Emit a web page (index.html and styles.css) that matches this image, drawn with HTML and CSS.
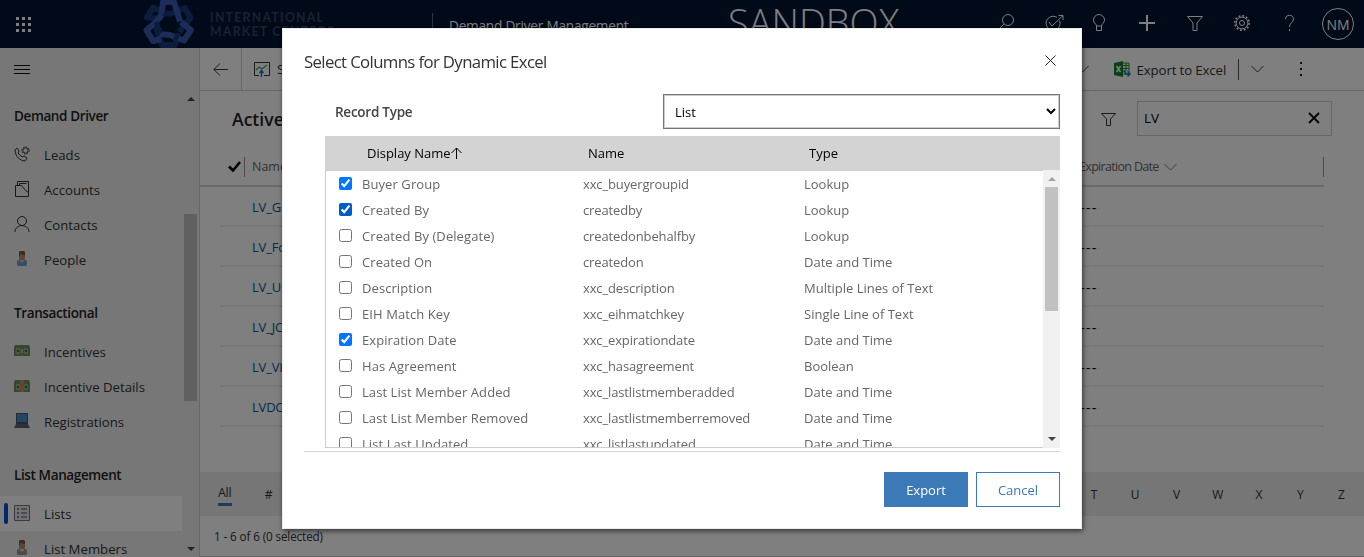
FILE: index.html
```html
<!DOCTYPE html>
<html lang="en">
<head>
<meta charset="utf-8">
<title>Demand Driver Management</title>
<link rel="stylesheet" href="styles.css">
</head>
<body>
<div class="app">
  <header class="topbar">
    <svg class="waffle" width="15" height="15" viewBox="0 0 15 15" fill="#fff"><path d="M0 0h3v3H0zM6 0h3v3H6zM12 0h3v3h-3zM0 6h3v3H0zM6 6h3v3H6zM12 6h3v3h-3zM0 12h3v3H0zM6 12h3v3H6zM12 12h3v3h-3z"/></svg>
    <svg class="logo" width="52" height="48" viewBox="0 0 52 48" fill="none" stroke-width="6" stroke-linejoin="round">
      <path d="M16 19L4 17.500L10 7.500L22 13Q27 15 32 12M32 12L42 8L47.500 18L36 32M13 27L19 45H32L34 37" stroke="#193878"/>
      <path d="M18.500 14L20 2H31L37 21.500" stroke="#3a5ab4"/>
      <path d="M19 14.500L12 23L3.500 30L10 41L18 39" stroke="#3a5ab4"/>
      <path d="M17 34L27 35L41 40.500L48 30L38 22" stroke="#3a5ab4"/>
      <path d="M13 22L18 33M36 33L32 40M21 13l8 1" stroke="#193878" stroke-width="4.500"/>
    </svg>
    <div class="brand"><span>INTERNATIONAL</span><span>MARKET CENTERS</span></div>
    <div class="topsep"></div>
    <span class="appname">Demand Driver Management</span>
    <span class="env">SANDBOX</span>
    <nav class="topicons">
      <svg width="48" height="48" viewBox="0 0 48 48"><circle cx="26" cy="20" r="5.500"/><path d="M22 24l-6 6"/></svg>
      <svg width="48" height="48" viewBox="0 0 48 48"><path d="M28 17.500a7 7 0 1 0 2.500 3M20 22l3 4L34 15.500M29.500 15.500H34V20"/></svg>
      <svg width="48" height="48" viewBox="0 0 48 48"><path d="M21.500 26c0-2-3-3-3-6a5.500 5.500 0 0 1 11 0c0 3-3 4-3 6zM21.500 26v4.500h5V26"/></svg>
      <svg width="48" height="48" viewBox="0 0 48 48"><path d="M24 15v16M16 23h16" stroke-width="2"/></svg>
      <svg width="48" height="48" viewBox="0 0 48 48"><path d="M16.500 16.500h15L26 23v7.500h-4V23z"/></svg>
      <svg width="48" height="48" viewBox="0 0 48 48"><circle cx="24" cy="23" r="2.500"/><circle cx="24" cy="23" r="5.900"/><circle cx="24" cy="23" r="7.200" stroke-width="1.600" stroke-dasharray="1.900 1.870"/></svg>
      <svg width="48" height="48" viewBox="0 0 48 48"><path d="M19.500 19c0-5 8-5 8 0 0 3.500-4 3.500-4 8M23.500 29v2"/></svg>
    </nav>
    <div class="avatar">NM</div>
  </header>

  <div class="body">
    <aside class="side">
      <div class="burger"><i></i><i></i><i></i></div>
      <div class="sidescroll">
        <div class="menu">
          <h2>Demand Driver</h2>
          <a><svg class="ico" viewBox="0 0 16 16"><path d="M1 4l2-2 2 3-1 2 4 4 2-1 3 2-2 3C6 15 1 10 1 4z"/><circle cx="11.500" cy="4.500" r="2.700"/><circle cx="11.500" cy="4.500" r="3.700" stroke-dasharray="1.400 1.500"/></svg><span>Leads</span></a>
          <a><svg class="ico" viewBox="0 0 16 16"><path d="M1.500 4.500v11h13v-4l-3-2-4-5zM3.500 4V.500h11v11M5.500 4V2.500h7"/></svg><span>Accounts</span></a>
          <a><svg class="ico" viewBox="0 0 16 16"><circle cx="8" cy="5" r="4.500"/><path d="M1 16c0-8.500 14-8.500 14 0"/></svg><span>Contacts</span></a>
          <a><svg class="ico solid" viewBox="0 0 16 16"><path d="M3 14V10l3-2h4l3 2v4l-1 1H4z" fill="#7098c8"/><path d="M6 7h4v3l-2 2-2-2z" fill="#d9c5b0"/><path d="M5 3h6v4l-1 2H6L5 7z" fill="#bc8864"/><path d="M5 1l1-1h4l1 1v3H9L8 3H6v2H5z" fill="#7c5640"/></svg><span>People</span></a>
          <h2>Transactional</h2>
          <a><svg class="ico solid" viewBox="0 0 16 16"><path d="M1 2h14l1 2v9H0V4z" fill="#6f9062"/><path d="M2 5h12v6H2z" fill="#94b082"/><path d="M3 7h2v2H3zM11 7h2v2h-2z" fill="#496345"/><path d="M6 5h4v6H6z" fill="#6f9062"/><path d="M7 6h2v4H7z" fill="#a8c494"/></svg><span>Incentives</span></a>
          <a><svg class="ico solid" viewBox="0 0 16 16"><path d="M1 2h14l1 2v10H0V4z" fill="#6f9062"/><path d="M2 6h12v6H2z" fill="#94b082"/><path d="M3 8h2v2H3zM11 8h2v2h-2z" fill="#496345"/><path d="M6 2h4v12H6z" fill="#c98d60"/></svg><span>Incentive Details</span></a>
          <a><svg class="ico solid" viewBox="0 0 16 16"><path d="M2 0h12v11H2z" fill="#48566a"/><path d="M3 1h10v8H3z" fill="#4690cc"/><path d="M2 11h12l2 4H0z" fill="#5b6068"/></svg><span>Registrations</span></a>
          <h2>List Management</h2>
          <a class="active"><svg class="ico" viewBox="0 0 16 16"><path d="M.500 .500h15v15H.500z" stroke="#777" fill="#e4e4e4"/><path d="M7 4h6M7 8h6M7 12h6" stroke="#555"/><path d="M3 4h2M3 8h2M3 12h2" stroke="#5b8ab8" stroke-width="2"/></svg><span>Lists</span></a>
          <a><svg class="ico solid" viewBox="0 0 16 16"><path d="M3 14V10l3-2h4l3 2v4l-1 1H4z" fill="#999"/><path d="M6 7h4v3l-2 2-2-2z" fill="#e0d4c8"/><path d="M5 3h6v4l-1 2H6L5 7z" fill="#bc8864"/><path d="M5 1l1-1h4l1 1v3H9L8 3H6v2H5z" fill="#7c5640"/></svg><span>List Members</span></a>
        </div>
        <div class="rail"><b class="up"></b><b class="thumb"></b><b class="down"></b></div>
      </div>
    </aside>

    <main class="main">
      <div class="commands">
        <div class="back"><svg width="16" height="14" viewBox="0 0 16 14" class="line"><path d="M7 .500L.800 6.500L7 12.500M1 6.500h14"/></svg></div>
        <div class="chart"><svg width="16" height="15" viewBox="0 0 16 15" class="line"><path d="M5 13.500H.500V.500h15v13H10"/><path d="M2 8l3-3 3 2 5-4" stroke="#35a35d" stroke-width="1.300"/><path d="M7.500 15V9M5.500 11l2-2.500 2 2.500" stroke="#0868c0" stroke-width="1.300"/></svg><span>Show Chart</span></div>
        <svg class="line cmdchev" width="13" height="8" viewBox="0 0 13 8"><path d="M.500 1l6 6 6-6"/></svg>
        <svg class="excel" width="17" height="16" viewBox="0 0 17 16"><path d="M8 2h7v11H8z" fill="#eee" stroke="#268b36"/><path d="M9 4.500h6M9 7.500h6M9 10h3M12 2v8" stroke="#268b36"/><path d="M0 2l9-2v16l-9-2z" fill="#12802a"/><path d="M2.500 5l4 6M6.500 5l-4 6" stroke="#fff" stroke-width="1.400"/><path d="M10 10l2 3h4M13.500 10.500L16 13l-2.500 2.500" stroke="#1973c8" fill="none" stroke-width="1.400"/></svg>
        <span class="exporttext">Export to Excel</span>
        <i class="cmdsep"></i>
        <svg class="line cmdchev2" width="13" height="8" viewBox="0 0 13 8"><path d="M.500 1l6 6 6-6"/></svg>
        <div class="dots"><i></i><i></i><i></i></div>
      </div>
      <div class="viewbar">
        <h1>Active Lists</h1>
        <svg class="line filt" width="15" height="13" viewBox="0 0 15 13"><path d="M.500 .500h14L9.500 6v6.500h-4V6z"/></svg>
        <div class="search"><span>LV</span><svg width="12" height="12" viewBox="0 0 12 12"><path d="M1 1l10 10M11 1L1 11" stroke="#000" stroke-width="1.800"/></svg></div>
      </div>
      <div class="gridhead">
        <svg class="tick" width="13" height="11" viewBox="0 0 13 11"><path d="M1 5.500l4 4L12 1" fill="none" stroke="#000" stroke-width="2.600"/></svg>
        <i></i><span class="gname">Name</span>
        <span class="gexp">Expiration Date</span>
        <svg class="line" width="13" height="8" viewBox="0 0 13 8"><path d="M.500 1l6 6 6-6"/></svg>
        <i class="endsep"></i>
      </div>
      <div class="rows">
        <div class="row"><a>LV_Group</a><span>---</span></div>
        <div class="row"><a>LV_Form</a><span>---</span></div>
        <div class="row"><a>LV_Users</a><span>---</span></div>
        <div class="row"><a>LV_JC</a><span>---</span></div>
        <div class="row"><a>LV_VIP</a><span>---</span></div>
        <div class="row"><a>LVDC</a><span>---</span></div>
      </div>
      <div class="alpha">
        <span class="all">All</span><span class="l">#</span><span class="l">A</span><span class="l">B</span><span class="l">C</span><span class="l">D</span><span class="l">E</span><span class="l">F</span><span class="l">G</span><span class="l">H</span><span class="l">I</span><span class="l">J</span><span class="l">K</span><span class="l">L</span><span class="l">M</span><span class="l">N</span><span class="l">O</span><span class="l">P</span><span class="l">Q</span><span class="l">R</span><span class="l">S</span><span class="l">T</span><span class="l">U</span><span class="l">V</span><span class="l">W</span><span class="l">X</span><span class="l">Y</span><span class="l">Z</span>
      </div>
      <div class="status">1 - 6 of 6 (0 selected)</div>
    </main>
  </div>
</div>

<div class="overlay">
  <section class="dialog">
    <div class="dlghead"><span class="dlgtitle">Select Columns for Dynamic Excel</span>
      <svg width="11" height="11" viewBox="0 0 11 11"><path d="M.500 .500l10 10M10.500 .500l-10 10" stroke="#222"/></svg></div>
    <div class="rectype"><label>Record Type</label><select><option>List</option></select></div>
    <div class="thead"><span class="h1c">Display Name<svg width="12" height="12" viewBox="0 0 12 12"><path d="M5.500 12V1M.500 6l5-5 5 5" fill="none" stroke="#000"/></svg></span><span class="h2c">Name</span><span>Type</span></div>
    <div class="tbox">
      <div class="trows">
        <div class="tr"><input type="checkbox" checked><span>Buyer Group</span><span class="sys">xxc_buyergroupid</span><span>Lookup</span></div>
        <div class="tr"><input type="checkbox" class="hot" checked><span>Created By</span><span class="sys">createdby</span><span>Lookup</span></div>
        <div class="tr"><input type="checkbox"><span>Created By (Delegate)</span><span class="sys">createdonbehalfby</span><span>Lookup</span></div>
        <div class="tr"><input type="checkbox"><span>Created On</span><span class="sys">createdon</span><span>Date and Time</span></div>
        <div class="tr"><input type="checkbox"><span>Description</span><span class="sys">xxc_description</span><span>Multiple Lines of Text</span></div>
        <div class="tr"><input type="checkbox"><span>EIH Match Key</span><span class="sys">xxc_eihmatchkey</span><span>Single Line of Text</span></div>
        <div class="tr"><input type="checkbox" checked><span>Expiration Date</span><span class="sys">xxc_expirationdate</span><span>Date and Time</span></div>
        <div class="tr"><input type="checkbox"><span>Has Agreement</span><span class="sys">xxc_hasagreement</span><span>Boolean</span></div>
        <div class="tr"><input type="checkbox"><span>Last List Member Added</span><span class="sys">xxc_lastlistmemberadded</span><span>Date and Time</span></div>
        <div class="tr"><input type="checkbox"><span>Last List Member Removed</span><span class="sys">xxc_lastlistmemberremoved</span><span>Date and Time</span></div>
        <div class="tr"><input type="checkbox"><span>List Last Updated</span><span class="sys">xxc_listlastupdated</span><span>Date and Time</span></div>
      </div>
      <div class="tscroll"><b class="up"></b><b class="thumb"></b><b class="down"></b></div>
    </div>
    <div class="rule"></div>
    <div class="btns"><button class="primary">Export</button><button>Cancel</button></div>
  </section>
</div>
</body>
</html>
```

FILE: styles.css
```css
* { box-sizing: border-box; }
body { margin: 0; overflow: hidden; font-family: "Open Sans", "Noto Sans", sans-serif; font-size: 13px; color: #333; }
svg { flex: none; display: block; }
.app { width: 1364px; height: 557px; background: #fff; display: flex; flex-direction: column; overflow: hidden; }

.topbar { height: 48px; flex: none; background: #001432; display: flex; align-items: center; overflow: hidden; white-space: nowrap; }
.waffle { margin-left: 16px; }
.logo { margin-left: 112px; }
.brand { width: 223px; margin-left: 15px; display: flex; flex-direction: column; font: 700 12.3px/14px Lato, sans-serif; color: #344463; letter-spacing: 1.25px; padding-top: 1px; }
.topsep { width: 1px; height: 23px; background: #5a6880; margin-left: -1px; }
.appname { width: 279px; margin-left: 16px; font-size: 13.6px; color: #fff; letter-spacing: -.2px; padding-top: 2px; }
.env { width: 254px; font-size: 38px; font-weight: 300; color: #fff; line-height: 44px; height: 48px; }
.topicons { display: flex; }
.topicons svg { fill: none; stroke: #fff; stroke-width: 1; margin-right: -.2px; }
.topicons svg:nth-child(-n+2) { margin-right: -1.5px; }
.avatar { width: 32px; height: 32px; border: 1px solid #fff; border-radius: 50%; margin-left: 8px; color: #fff; font-size: 14px; line-height: 31px; text-align: center; flex: none; }

.body { flex: 1; display: flex; min-height: 0; }
.side { width: 200px; background: #efefef; border-right: 1px solid #cfcfcf; display: flex; flex-direction: column; }
.burger { height: 42px; padding: 17px 0 0 14px; display: flex; flex-direction: column; gap: 3px; flex: none; }
.burger i { width: 16px; height: 1px; background: #111; }
.sidescroll { flex: 1; display: flex; min-height: 0; overflow: hidden; }
.menu { width: 182px; font-size: 13.2px; }
.menu h2 { margin: 0; height: 57px; padding: 26px 0 0 14px; font-size: 13.5px; line-height: 20px; font-weight: 600; color: #222; letter-spacing: -.38px; }
.menu h2:first-child { height: 47px; padding-top: 16px; }
.menu a { height: 35px; display: flex; align-items: center; gap: 14px; padding-left: 14px; color: #333; }
.menu a.active { background: #fff; padding-left: 4px; }
.menu a.active::before { content: ""; width: 4px; height: 21px; border-radius: 2px; background: #0050d8; margin-right: -8px; }
.ico { width: 16px; height: 16px; fill: none; stroke: #333; stroke-width: 1; margin-top: -2px; }
.ico.solid { stroke: none; }
.rail { width: 17px; padding: 7px 0 6px; display: flex; flex-direction: column; align-items: center; }
.rail .thumb { width: 13px; height: 187px; background: #c1c1c1; margin: 113px 0 auto; flex: none; }
.up { border: 4px solid transparent; border-top: 0; border-bottom: 4px solid #444; }
.down { border: 4px solid transparent; border-bottom: 0; border-top: 4px solid #444; }

.main { flex: 1; display: flex; flex-direction: column; min-width: 0; border-bottom: 1px solid #d0d0d0; }
.line { fill: none; stroke: #222; stroke-width: .9; }
.commands { height: 43px; border-bottom: 1px solid #cfcfcf; display: flex; align-items: center; flex: none; white-space: nowrap; }
.back { width: 42px; height: 42px; border-right: 1px solid #cfcfcf; padding: 15px 0 0 13px; }
.chart { width: 634px; padding-left: 12px; display: flex; align-items: center; gap: 7px; font-size: 13.5px; }
.cmdchev { margin-left: 200px; margin-right: 25px; }
.exporttext { margin-left: 5.5px; width: 101.5px; font-size: 13.3px; letter-spacing: -.15px; padding-top: 1px; }
.cmdsep { width: 1px; height: 21px; background: #555; }
.cmdchev2 { margin-left: 12px; }
.dots { margin-left: 36px; display: flex; flex-direction: column; gap: 4px; }
.dots i { width: 2px; height: 2px; background: #222; }
.viewbar { height: 56px; display: flex; align-items: center; padding-left: 32px; flex: none; }
.viewbar h1 { margin: 0; width: 869px; font-size: 17.6px; font-weight: 600; color: #222; }
.search { width: 195px; height: 35px; margin-left: 21px; margin-bottom: 2px; border: 1px solid #ccc; padding: 0 11px 0 6px; display: flex; align-items: center; justify-content: space-between; font-size: 13.5px; color: #000; }
.gridhead { height: 40px; border-bottom: 2px solid #d5d5d5; display: flex; align-items: center; flex: none; margin-right: 40px; padding: 1px 0 0 28px; color: #666; font-size: 12.5px; }
.gridhead i { width: 1px; height: 20px; background: #999; margin-left: 3px; }
.gname { margin-left: 7px; width: 827px; }
.gexp { width: 85px; letter-spacing: -.68px; white-space: nowrap; }
.gridhead .line { stroke: #666; }
.gridhead .endsep { margin-left: auto; }
.rows { margin: 0 40px 0 20px; height: 285px; flex: none; }
.row { height: 40px; border-bottom: 2px solid #eee; padding: 2px 0 0 32px; display: flex; align-items: center; letter-spacing: -.2px; }
.row a { width: 828px; color: #005a9e; }
.row span { color: #111; font-size: 15px; letter-spacing: 1px; }
.alpha { height: 44px; background: #ececec; display: flex; align-items: center; flex: none; padding-left: 18px; font-size: 12px; }
.all { width: 14px; margin-right: 16px; border-bottom: 3px solid #3c79b5; line-height: 20px; height: 23px; font-size: 12.5px; letter-spacing: -.3px; }
.l { width: 41.27px; flex: none; text-align: center; }
.status { padding: 12px 0 0 14px; font-size: 11.7px; letter-spacing: -.12px; }

.overlay { position: fixed; inset: 0; background: rgba(0, 0, 0, .5); display: flex; align-items: center; justify-content: center; }
.dialog { width: 800px; height: 501px; background: #fff; border: 1px solid #ececec; box-shadow: 1px 2px 5px rgba(0, 0, 0, .6); padding: 0 21px; white-space: nowrap; }
.dlghead { height: 65px; padding-right: 4px; display: flex; justify-content: space-between; align-items: center; }
.dlghead svg { margin-bottom: 3px; }
.dlgtitle { font-size: 16.8px; font-weight: 400; color: #333; letter-spacing: -.64px; }
.rectype { height: 35px; padding-left: 31px; display: flex; justify-content: space-between; align-items: center; }
.rectype label { font-size: 13.5px; font-weight: 600; color: #444; letter-spacing: -.25px; padding-top: 1px; }
.rectype select { width: 397px; height: 35px; border: 1px solid #767676; box-shadow: inset 0 0 0 1px #ccc; border-radius: 0; padding: 0 1px 0 7px; font: 13px "Open Sans", sans-serif; background: #fff; color: #000; }
.thead { margin: 7px 0 0 21px; height: 34px; background: #d3d3d3; display: flex; align-items: center; padding-left: 42px; font-size: 13px; color: #000; }
.h1c { width: 221px; display: flex; align-items: center; }
.h2c { width: 221px; }
.tbox { margin-left: 21px; height: 278px; display: flex; overflow: hidden; }
.trows { flex: 1; border: solid #ccc; border-width: 1px 0 1px 1px; overflow: hidden; }
.tr { height: 26px; display: grid; grid-template-columns: 23px 221px 221px auto; align-items: center; padding-left: 13px; color: #666; font-size: 13px; line-height: 26px; }
.tr input { margin: 0 0 2px; width: 13px; height: 13px; }
.tr input + span { letter-spacing: .08px; }
.tr .hot { accent-color: #005cc8; }
.sys { letter-spacing: -.13px; }
.tscroll { width: 17px; background: #f1f1f1; display: flex; flex-direction: column; align-items: center; padding: 7px 0; }
.tscroll .up { border-bottom-color: #a3a3a3; }
.tscroll .thumb { width: 13px; height: 124px; background: #c1c1c1; margin: 6px 0 auto; }
.rule { height: 1px; background: #d6d6d6; margin-top: 3px; }
.btns { margin-top: 20px; display: flex; justify-content: flex-end; gap: 8px; }
.btns button { width: 84px; height: 35px; border: 1px solid #3b79b7; background: #fff; color: #3b79b7; font: 13px "Open Sans", sans-serif; padding: 0; }
.btns .primary { background: #3b79b7; color: #fff; }
```
